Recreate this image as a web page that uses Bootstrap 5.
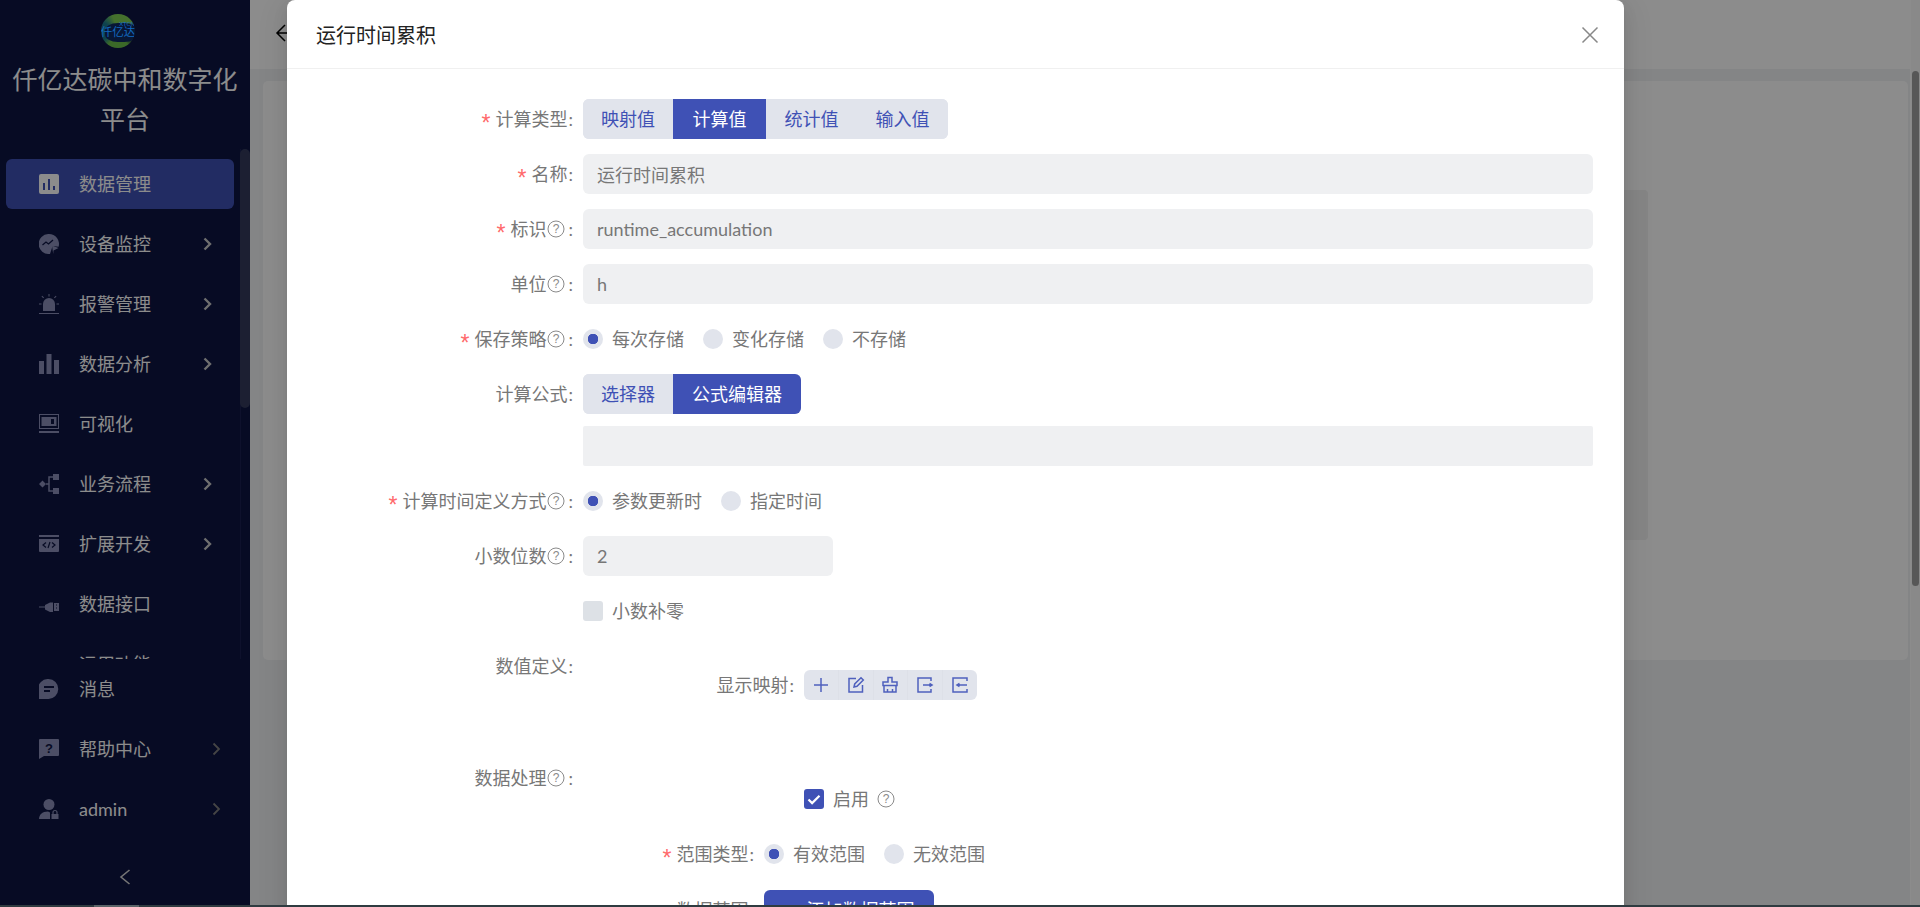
<!DOCTYPE html>
<html lang="zh">
<head>
<meta charset="utf-8">
<title>运行时间累积</title>
<link href="https://cdn.jsdelivr.net/npm/bootstrap@5.3.0/dist/css/bootstrap.min.css" rel="stylesheet">
<style>
html,body{height:907px;overflow:hidden}
body{font-family:Lato,"Noto Sans CJK SC","Liberation Sans",sans-serif;font-size:18px;background:#f0f2f5}
.form-control,.btn{font-family:Lato,"Noto Sans CJK SC","Liberation Sans",sans-serif}
.shell{height:907px;width:1920px;position:relative;overflow:hidden}
.side{width:250px;height:907px;background:#0d1442;color:#fff;position:relative;flex:none}
.side-head{height:149px;padding-top:14px;text-align:center;font-size:25px;line-height:40px;padding-left:8px;padding-right:8px;color:#fff}
.logo-disc{width:34px;height:34px;border-radius:50%;margin:0 0 11px 93px;position:relative;background:conic-gradient(#7fce52 0 55deg,#0d1442 75deg 115deg,#6cc04a 145deg 215deg,#1a7890 240deg 300deg,#7fce52 340deg);overflow:hidden}
.logo-disc::after{content:"";position:absolute;left:4px;right:-2px;top:9px;bottom:6px;border-radius:40%;background:#0f2a62}
.logo-a{position:absolute;z-index:1;left:-1px;right:-1px;top:10px;font-size:11.5px;line-height:16px;color:#136ac0;white-space:nowrap}
.logo-b{position:absolute;z-index:1;right:0;top:6px;font-size:6px;line-height:8px;color:#136ac0}
.scroll-nav{height:510px;padding-top:10px;overflow:hidden;border-right:1px solid #1a2050;width:241px}
.mitem{height:50px;margin:0 6px 10px;width:228px;border-radius:6px;font-size:18px;color:#fff}
.mitem.cur{background:#3f51b5}
.mitem svg.mi{width:20px;height:20px;margin-left:33px;margin-right:20px;flex:none;fill:#8a8fb8;color:#8a8fb8}
.mitem.cur svg.mi{fill:#fff;color:#fff}
.chev{margin-left:auto;margin-right:22px;width:9px;height:14px;fill:none;stroke:#c9c9c9;stroke-width:2.4}
.low .chev{margin-right:13px;stroke:#7f7f7f;stroke-width:1.8}
.low{padding-top:5px}
.fold{position:absolute;left:119px;top:868px;width:12px;height:18px;fill:none;stroke:#d5d5d5;stroke-width:1.6}
.thumb{position:absolute;left:240px;top:149px;width:10px;height:259px;border-radius:5px;background:#333a5c}
.pane{flex:1;min-width:0;position:relative}
.top-strip{height:69px;background:#fff;padding-left:25px;padding-bottom:3px}
.board{margin:12px 12px 0 13px;height:579px;background:#fff;border-radius:5px;padding-top:109px;padding-left:40px;padding-right:260px}
.inner-box{height:350px;background:#f2f2f2;border-radius:4px}
.vbar{position:absolute;right:0;top:0;bottom:0;width:10px;background:#fafafa;border-left:1px solid #fff}
.vbar i{display:block;position:absolute;left:1px;right:1px;top:71px;height:515px;border-radius:5px;background:#9f9f9f}
.veil{position:absolute;inset:0;background:rgba(0,0,0,.45)}
.sheet{position:absolute;left:287px;top:0;width:1337px;height:960px;background:#fff;border-radius:8px;box-shadow:0 6px 16px rgba(0,0,0,.08),0 3px 6px -4px rgba(0,0,0,.12),0 9px 28px 8px rgba(0,0,0,.05);border:0}
.sheet-head{height:69px;border-bottom:1px solid #f0f0f0;padding:2px 26px 0 29px;font-size:20px;color:#222;border-radius:8px 8px 0 0}
.x-btn{width:18px;height:18px;stroke:#888;stroke-width:1.5;fill:none;margin-right:-1px}
.sheet-body{padding:30px 31px 0 0}
.frow{min-height:40px;margin-bottom:15px}
.flab{width:286px;flex:none;margin-right:10px;height:40px;color:#777;white-space:nowrap}
.flab.w211{width:211px}
.flab.w171{width:171px}
.flab.tool-lab{margin-top:24px;height:30px}
.req{color:#ff6a6c;margin-right:5px;margin-top:9px;font-size:23px;line-height:1;font-family:"Liberation Sans",sans-serif}
.cln{margin-left:1px}
.hq+.cln{margin-left:3px}
.hq{width:18px;height:18px;margin-left:1px;flex:none;fill:none;stroke:#8a8a8a}
.hq text{fill:#8a8a8a;stroke:none;font-size:12px;font-family:"Liberation Sans",sans-serif}
.sg{background:#e1e4ec;border-radius:6px;height:40px}
.sg .btn{height:40px;width:91px;flex:none;padding:0;margin:0;font-size:18px;line-height:40px;color:#3f51b5;background:#e1e4ec;border:0;border-radius:6px;white-space:nowrap}
.sg .btn.on{background:#3f51b5;color:#fff;border-radius:0}
.sg .btn.on.fin{border-radius:0 6px 6px 0}
.sg .btn:not(:last-child){border-top-right-radius:0;border-bottom-right-radius:0}
.sg .btn:not(:first-child){border-top-left-radius:0;border-bottom-left-radius:0}
.btn-group.sg>:not(.btn-check:first-child)+.btn{margin-left:0}
.sg .w90{width:90px}
.sg .w93{width:93px}
.sg .w128{width:128px}
.fld{height:40px;background:#eff0f2;border:0;border-radius:6px;padding:0 14px;font-size:18px;color:#777}
.fld:focus,.fld[readonly]{background:#eff0f2;color:#777;box-shadow:none}
.fld-narrow{width:250px;padding-left:14px}
.blank{height:40px;background:#eff0f2;margin-top:12px;border-radius:2px}
.opt{color:#777;margin-right:19px;height:40px;white-space:nowrap}
.opt .form-check-input{width:20px;height:20px;margin:0 9px 0 0;border:0;background-color:#e1e4ec;background-image:none;float:none;flex:none}
.opt .form-check-input:checked{background-color:#e1e4ec;background-image:radial-gradient(circle,#3f51b5 0 5px,transparent 5.5px)}
.opt .form-check-input[type=checkbox]{border-radius:3px;background-color:#dde1e6}
.opt .form-check-input.tick:checked{background-color:#3f51b5;background-image:url("data:image/svg+xml,%3Csvg xmlns='http://www.w3.org/2000/svg' viewBox='0 0 20 20'%3E%3Cpath d='M4.5 10.5l3.6 3.6 7.4-7.4' fill='none' stroke='%23fff' stroke-width='2.2'/%3E%3C/svg%3E")}
.r-box{height:97px}
.tools{height:30px;background:#e1e4ec;border-radius:6px;width:173px;margin-top:24px}
.tools span{flex:1;height:30px;border-right:1px solid #dde0e8}
.tools span:last-child{border-right:0}
.tools svg{width:18px;height:18px;fill:none;stroke:#4f60bd;stroke-width:1.5}
.chk-line{margin-left:221px;padding-top:31px;height:51px;margin-bottom:25px}
.chk-line .opt{height:20px;margin:0;padding:0}
.chk-line .form-check-input{margin-top:0}
.range-row{padding-top:1px}
.add-btn{width:170px;height:40px;background:#3f51b5;color:#fff;border:0;border-radius:6px;font-size:18px;padding:0 0 0 8px}
.strip{position:absolute;left:0;right:0;bottom:0;height:2px;background:#2f3b40}
.strip i{position:absolute;left:94px;width:45px;top:0;bottom:0;background:#5a6468}
</style>
</head>
<body>
<div class="shell d-flex">
  <aside class="side">
    <div class="side-head">
      <div class="logo-disc"><span class="logo-b">XTCN</span><span class="logo-a">仟亿达</span></div>
      仟亿达碳中和数字化平台
    </div>
    <div class="scroll-nav">
      <div class="mitem cur d-flex align-items-center">
        <svg class="mi" viewBox="0 0 20 20"><path fill-rule="evenodd" d="M2 0h16a2 2 0 0 1 2 2v16a2 2 0 0 1-2 2H2a2 2 0 0 1-2-2V2a2 2 0 0 1 2-2zM4 9v7h2V9zm5-4v11h2V5zm5 7v4h2v-4z"/></svg>数据管理
      </div>
      <div class="mitem d-flex align-items-center">
        <svg class="mi" viewBox="0 0 20 20"><path d="M10 0a10 10 0 0 1 9.6 12.8l-6-.8-2.6 7.9A10 10 0 1 1 10 0z"/><path d="M3.5 11l3.5-3 2.5 2L14 6" fill="none" stroke="#0d1442" stroke-width="1.3"/><path d="M13 11.5l6.500 2.500-5 2.500-.3 3.500z"/></svg>设备监控
        <svg class="chev" viewBox="0 0 9 14"><path d="M1.500 1.500L7 7l-5.500 5.500"/></svg>
      </div>
      <div class="mitem d-flex align-items-center">
        <svg class="mi" viewBox="0 0 20 20"><path d="M4 17V10a6 6 0 0 1 12 0v7zM0 19h20v1H0zM9.500 0h1v2.500h-1zM2.500 2.500l.7-.7 1.800 1.800-.7.7zM17.500 2.500l-.7-.7-1.800 1.800.7.7zM0 9.500h2.500v1H0zM17.500 9.500H20v1h-2.500z"/></svg>报警管理
        <svg class="chev" viewBox="0 0 9 14"><path d="M1.500 1.500L7 7l-5.500 5.500"/></svg>
      </div>
      <div class="mitem d-flex align-items-center">
        <svg class="mi" viewBox="0 0 20 20"><path d="M0 7h5v13H0zM7.500 0h5v20h-5zM15 6h5v14h-5z"/></svg>数据分析
        <svg class="chev" viewBox="0 0 9 14"><path d="M1.500 1.500L7 7l-5.500 5.500"/></svg>
      </div>
      <div class="mitem d-flex align-items-center">
        <svg class="mi" viewBox="0 0 20 20"><path fill-rule="evenodd" d="M0 0h20v15H0zM1 1v13h18V1zM2.500 3h15v9h-15zM12 5v5h3V5zM0 17h20v2H0z"/></svg>可视化
      </div>
      <div class="mitem d-flex align-items-center">
        <svg class="mi" viewBox="0 0 20 20"><path d="M3.500 6.500l3.500 3.500-3.500 3.500L0 10zM14 0h6v6h-6zM14 14h6v6h-6z"/><path d="M14 3h-4v14h4M7 10h3" fill="none" stroke="currentColor" stroke-width="1.500"/></svg>业务流程
        <svg class="chev" viewBox="0 0 9 14"><path d="M1.500 1.500L7 7l-5.500 5.500"/></svg>
      </div>
      <div class="mitem d-flex align-items-center">
        <svg class="mi" viewBox="0 0 20 20"><path d="M0 1h20v2H0z"/><path fill-rule="evenodd" d="M0 5h20v12a1 1 0 0 1-1 1H1a1 1 0 0 1-1-1z"/><path d="M7 8.500l-3 2.500 3 2.500M13 8.500l3 2.500-3 2.500M11 8L9 14" fill="none" stroke="#0d1442" stroke-width="1.200"/></svg>扩展开发
        <svg class="chev" viewBox="0 0 9 14"><path d="M1.500 1.500L7 7l-5.500 5.500"/></svg>
      </div>
      <div class="mitem d-flex align-items-center">
        <svg class="mi" viewBox="0 0 20 20"><path d="M0 12.500h7v1H0zM6 11l5-2.500h3v9.500h-3l-5-2.500zM15 9h5v8h-5z"/><path d="M17 11h1M17 14h1" stroke="#0d1442"/></svg>数据接口
      </div>
      <div class="mitem d-flex align-items-center">
        <svg class="mi" viewBox="0 0 20 20"><path d="M0 10a4.500 4.500 0 0 1 9 0v6H0zM11 10a4.500 4.500 0 0 1 9 0v6h-9z"/></svg>运用功能
      </div>
    </div>
    <div class="low">
      <div class="mitem d-flex align-items-center">
        <svg class="mi" viewBox="0 0 20 20"><path d="M10.500 0A9.500 9.500 0 1 1 10 20H0v-9.500A10 10 0 0 1 10.500 0z" transform="translate(-1 0)"/><path d="M5 8h10M5 12h6" stroke="#0d1442" stroke-width="1.800" fill="none"/></svg>消息
      </div>
      <div class="mitem d-flex align-items-center">
        <svg class="mi" viewBox="0 0 20 20"><path d="M1 0h18a1 1 0 0 1 1 1v15a1 1 0 0 1-1 1H5l-5 3V1a1 1 0 0 1 1-1z"/><text x="10" y="13.500" font-size="13" font-weight="700" text-anchor="middle" fill="#0d1442" font-family="Liberation Sans">?</text></svg>帮助中心
        <svg class="chev" viewBox="0 0 9 14"><path d="M1.500 1.500L7 7l-5.500 5.500"/></svg>
      </div>
      <div class="mitem d-flex align-items-center">
        <svg class="mi" viewBox="0 0 20 20"><circle cx="10" cy="5.500" r="5.500"/><path d="M0 20c0-4 3-7.500 9-7.500l2 1v6.500z"/><path d="M12.500 15h7v5h-7z"/><path d="M14 15v-1.500a2 2 0 0 1 4 0V15" fill="none" stroke="currentColor" stroke-width="1.200"/></svg>admin
        <svg class="chev" viewBox="0 0 9 14"><path d="M1.500 1.500L7 7l-5.500 5.500"/></svg>
      </div>
    </div>
    <svg class="fold" viewBox="0 0 12 18"><path d="M10.500 2L2 9l8.500 7"/></svg>
    <div class="thumb"></div>
  </aside>
  <main class="pane">
    <div class="top-strip d-flex align-items-center">
      <svg width="20" height="20" viewBox="0 0 20 20" fill="none" stroke="#000" stroke-width="1.500" class="flex-none"><path d="M10 2L2 10l8 8M2 10h18"/></svg>
    </div>
    <div class="board"><div class="inner-box"></div></div>
    <div class="vbar"><i></i></div>
  </main>

  <div class="veil"></div>

  <section class="sheet modal-content">
    <header class="sheet-head d-flex align-items-center justify-content-between">
      <span>运行时间累积</span>
      <svg class="x-btn" viewBox="0 0 18 18"><path d="M1.500 1.500l15 15M16.500 1.500l-15 15"/></svg>
    </header>
    <div class="sheet-body">
      <div class="frow d-flex">
        <div class="flab d-flex align-items-center justify-content-end"><span class="req">*</span>计算类型<span class="cln">:</span></div>
        <div class="btn-group sg" role="group">
          <button type="button" class="btn w90">映射值</button>
          <button type="button" class="btn on w93">计算值</button>
          <button type="button" class="btn">统计值</button>
          <button type="button" class="btn">输入值</button>
        </div>
      </div>
      <div class="frow d-flex">
        <div class="flab d-flex align-items-center justify-content-end"><span class="req">*</span>名称<span class="cln">:</span></div>
        <input class="form-control fld" readonly value="运行时间累积">
      </div>
      <div class="frow d-flex">
        <div class="flab d-flex align-items-center justify-content-end"><span class="req">*</span>标识<svg class="hq" viewBox="0 0 18 18"><circle cx="9" cy="9" r="8"/><text x="9" y="13.200" text-anchor="middle">?</text></svg><span class="cln">:</span></div>
        <input class="form-control fld" readonly value="runtime_accumulation">
      </div>
      <div class="frow d-flex">
        <div class="flab d-flex align-items-center justify-content-end">单位<svg class="hq" viewBox="0 0 18 18"><circle cx="9" cy="9" r="8"/><text x="9" y="13.200" text-anchor="middle">?</text></svg><span class="cln">:</span></div>
        <input class="form-control fld" readonly value="h">
      </div>
      <div class="frow d-flex">
        <div class="flab d-flex align-items-center justify-content-end"><span class="req">*</span>保存策略<svg class="hq" viewBox="0 0 18 18"><circle cx="9" cy="9" r="8"/><text x="9" y="13.200" text-anchor="middle">?</text></svg><span class="cln">:</span></div>
        <label class="opt d-flex align-items-center"><input class="form-check-input" type="radio" name="s1" checked>每次存储</label>
        <label class="opt d-flex align-items-center"><input class="form-check-input" type="radio" name="s1">变化存储</label>
        <label class="opt d-flex align-items-center"><input class="form-check-input" type="radio" name="s1">不存储</label>
      </div>
      <div class="frow d-flex">
        <div class="flab d-flex align-items-center justify-content-end">计算公式<span class="cln">:</span></div>
        <div class="flex-grow-1">
          <div class="btn-group sg" role="group">
            <button type="button" class="btn w90">选择器</button>
            <button type="button" class="btn on fin w128">公式编辑器</button>
          </div>
          <div class="blank"></div>
        </div>
      </div>
      <div class="frow d-flex">
        <div class="flab d-flex align-items-center justify-content-end"><span class="req">*</span>计算时间定义方式<svg class="hq" viewBox="0 0 18 18"><circle cx="9" cy="9" r="8"/><text x="9" y="13.200" text-anchor="middle">?</text></svg><span class="cln">:</span></div>
        <label class="opt d-flex align-items-center"><input class="form-check-input" type="radio" name="s2" checked>参数更新时</label>
        <label class="opt d-flex align-items-center"><input class="form-check-input" type="radio" name="s2">指定时间</label>
      </div>
      <div class="frow d-flex">
        <div class="flab d-flex align-items-center justify-content-end">小数位数<svg class="hq" viewBox="0 0 18 18"><circle cx="9" cy="9" r="8"/><text x="9" y="13.200" text-anchor="middle">?</text></svg><span class="cln">:</span></div>
        <input class="form-control fld fld-narrow" readonly value="2">
      </div>
      <div class="frow d-flex">
        <div class="flab"></div>
        <label class="opt d-flex align-items-center"><input class="form-check-input" type="checkbox">小数补零</label>
      </div>
      <div class="frow d-flex r-box">
        <div class="flab d-flex align-items-center justify-content-end">数值定义<span class="cln">:</span></div>
        <div class="d-flex align-items-start">
          <div class="flab w211 tool-lab d-flex justify-content-end align-items-center">显示映射<span class="cln">:</span></div>
          <div class="tools d-flex">
            <span class="d-flex align-items-center justify-content-center"><svg viewBox="0 0 18 18"><path d="M9 2v14M2 9h14"/></svg></span>
            <span class="d-flex align-items-center justify-content-center"><svg viewBox="0 0 18 18"><path d="M9 2.500H2v13.500h13.500V9"/><path d="M7 11l.7-3L14 1.700l2.300 2.300L10 10.300z"/></svg></span>
            <span class="d-flex align-items-center justify-content-center"><svg viewBox="0 0 18 18"><path d="M7 1.500h4V6h5v3.500H2V6h5zM3 9.500V16h12V9.500M6.500 16v-3M11.500 16v-3"/></svg></span>
            <span class="d-flex align-items-center justify-content-center"><svg viewBox="0 0 18 18"><path d="M15 5V2H2v14h13v-3M7 9h9M13.500 7.500L16 9l-2.500 1.500"/></svg></span>
            <span class="d-flex align-items-center justify-content-center"><svg viewBox="0 0 18 18"><path d="M16 5V2H2v14h14v-3M6 9h10M8.500 7.500L6 9l2.500 1.500"/></svg></span>
          </div>
        </div>
      </div>
      <div class="d-flex">
        <div class="flab d-flex align-items-center justify-content-end">数据处理<svg class="hq" viewBox="0 0 18 18"><circle cx="9" cy="9" r="8"/><text x="9" y="13.200" text-anchor="middle">?</text></svg><span class="cln">:</span></div>
        <div class="flex-grow-1">
          <div class="chk-line">
            <label class="opt d-flex align-items-center"><input class="form-check-input tick" type="checkbox" checked>启用<svg class="hq ms-2" viewBox="0 0 18 18"><circle cx="9" cy="9" r="8"/><text x="9" y="13.200" text-anchor="middle">?</text></svg></label>
          </div>
          <div class="frow d-flex">
            <div class="flab w171 d-flex align-items-center justify-content-end"><span class="req">*</span>范围类型<span class="cln">:</span></div>
            <label class="opt d-flex align-items-center"><input class="form-check-input" type="radio" name="s3" checked>有效范围</label>
            <label class="opt d-flex align-items-center"><input class="form-check-input" type="radio" name="s3">无效范围</label>
          </div>
          <div class="frow d-flex range-row">
            <div class="flab w171 d-flex align-items-center justify-content-end"><span class="req">*</span>数据范围<span class="cln">:</span></div>
            <button type="button" class="btn add-btn">+ 添加数据范围</button>
          </div>
        </div>
      </div>
    </div>
  </section>
  <div class="strip"><i></i></div>
</div>
<script src="https://cdn.jsdelivr.net/npm/bootstrap@5.3.0/dist/js/bootstrap.bundle.min.js"></script>
</body>
</html>
